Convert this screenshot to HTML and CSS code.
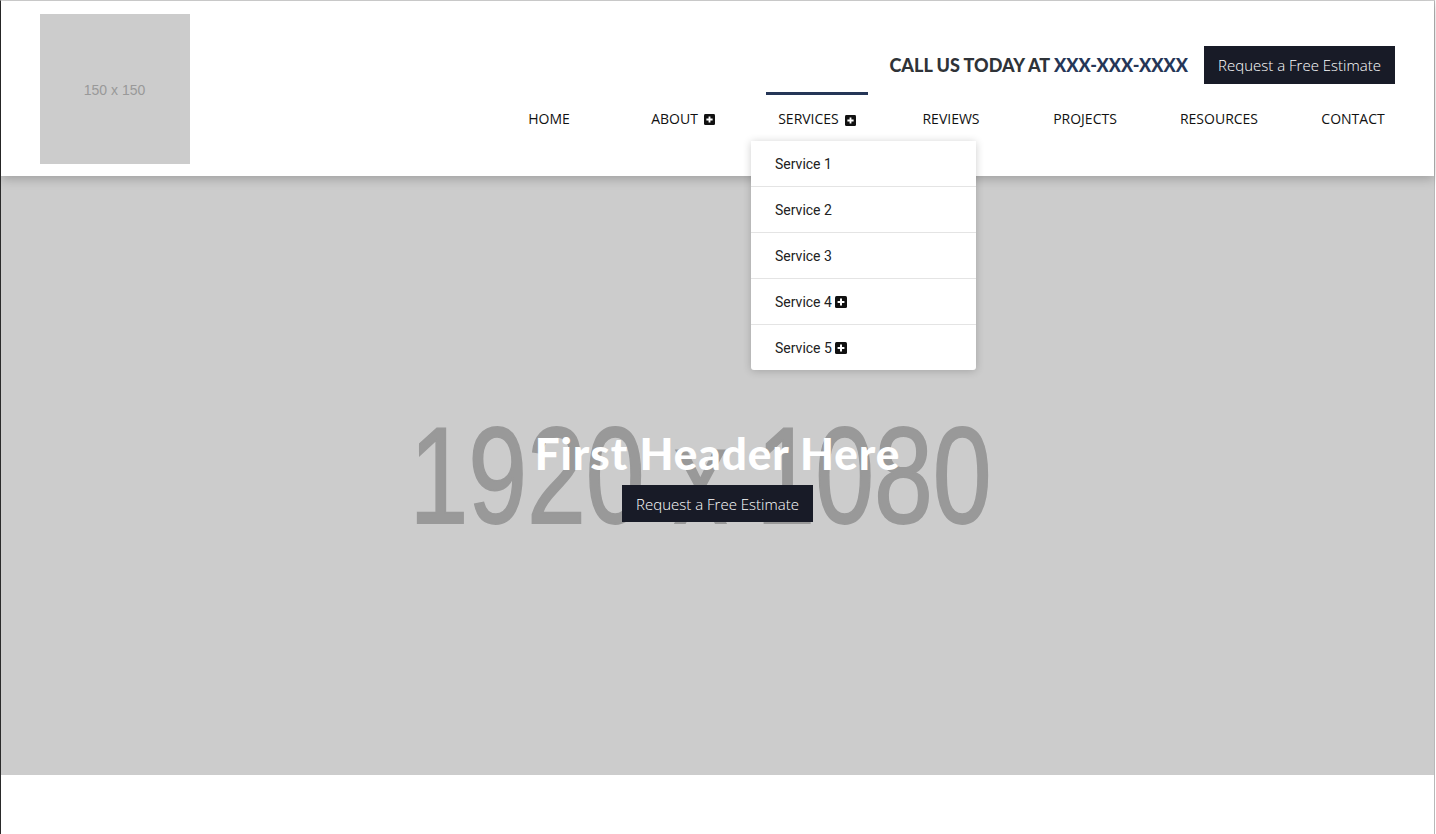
FILE: index.html
```html
<!DOCTYPE html>
<html lang="en">
<head>
<meta charset="utf-8">
<title>Home</title>
<link rel="stylesheet" href="styles.css">
</head>
<body>
<div class="page">
  <header class="site-header">
    <div class="logo"><span>150 x 150</span></div>
    <div class="header-right">
      <div class="top-row">
        <p class="call">CALL US TODAY AT <span class="phone">XXX-XXX-XXXX</span></p>
        <a class="btn" href="#">Request a Free Estimate</a>
      </div>
      <nav class="main-nav">
        <ul class="menu">
          <li class="menu-item"><a href="#">HOME</a></li>
          <li class="menu-item"><a href="#">ABOUT <svg class="plus" viewBox="0 0 12 12"><rect width="12" height="12" rx="1.5" fill="#111"/><path d="M6 2.6v6.8M2.6 6h6.8" stroke="#fff" stroke-width="2"/></svg></a></li>
          <li class="menu-item active"><a href="#">SERVICES <svg class="plus low" viewBox="0 0 12 12"><rect width="12" height="12" rx="1.5" fill="#111"/><path d="M6 2.6v6.8M2.6 6h6.8" stroke="#fff" stroke-width="2"/></svg></a>
            <ul class="dropdown">
              <li><a href="#">Service 1</a></li>
              <li><a href="#">Service 2</a></li>
              <li><a href="#">Service 3</a></li>
              <li><a href="#">Service 4 <svg class="plus sm" viewBox="0 0 12 12"><rect width="12" height="12" rx="1.5" fill="#111"/><path d="M6 2.6v6.8M2.6 6h6.8" stroke="#fff" stroke-width="2"/></svg></a></li>
              <li><a href="#">Service 5 <svg class="plus sm" viewBox="0 0 12 12"><rect width="12" height="12" rx="1.5" fill="#111"/><path d="M6 2.6v6.8M2.6 6h6.8" stroke="#fff" stroke-width="2"/></svg></a></li>
            </ul>
          </li>
          <li class="menu-item"><a href="#">REVIEWS</a></li>
          <li class="menu-item"><a href="#">PROJECTS</a></li>
          <li class="menu-item"><a href="#">RESOURCES</a></li>
          <li class="menu-item"><a href="#">CONTACT</a></li>
        </ul>
      </nav>
    </div>
  </header>
  <section class="hero">
    <div class="hero-ph">1920 x 1080</div>
    <div class="hero-content">
      <h1 class="hero-title">First Header Here</h1>
      <a class="btn" href="#">Request a Free Estimate</a>
    </div>
  </section>
  <div class="below"></div>
</div>
</body>
</html>
```

FILE: styles.css
```css
* { box-sizing: border-box; }
html, body { margin: 0; padding: 0; background: #fff; }
body { font-family: "Open Sans", "Liberation Sans", sans-serif; }
a { text-decoration: none; color: inherit; }

.page {
  width: 1435px;
  border-left: 1px solid #2a2a2a;
  border-right: 1px solid #b8b8b8;
  border-top: 1px solid #d4d4d4;
  min-height: 834px;
}

.site-header {
  position: relative;
  z-index: 5;
  height: 175px;
  background: #fff;
  display: flex;
  align-items: flex-start;
  padding: 13px 39px 0 39px;
  box-shadow: 0 3px 10px rgba(0,0,0,0.22);
}

.logo {
  width: 150px;
  height: 150px;
  background: #ccc;
  display: flex;
  align-items: center;
  justify-content: center;
  flex-shrink: 0;
  padding-top: 2px;
  padding-right: 1px;
}
.logo span {
  font-family: "Liberation Sans", Arial, sans-serif;
  font-size: 14px;
  color: #999;
}

.header-right {
  flex: 1;
  display: flex;
  flex-direction: column;
  align-items: flex-end;
  padding-top: 32px;
}

.top-row {
  display: flex;
  align-items: center;
  gap: 16px;
}
.call {
  margin: 0;
  font-family: Lato, "Liberation Sans", sans-serif;
  font-weight: 900;
  font-size: 18px;
  color: #2f3338;
}
.phone { color: #253657; }

.btn {
  display: inline-flex;
  align-items: center;
  justify-content: center;
  width: 191px;
  height: 38px;
  background: #181b27;
  color: #fff;
  font-family: "Open Sans", sans-serif;
  font-weight: 300;
  font-size: 15px;
}

.main-nav { margin-top: 8px; margin-right: -25px; }
.menu {
  list-style: none;
  margin: 0;
  padding: 0;
  display: flex;
}
.menu-item {
  position: relative;
  width: 134px;
  display: flex;
  justify-content: center;
}
.menu-item > a {
  display: inline-flex;
  align-items: center;
  gap: 6px;
  padding: 14px 12px 12px;
  border-top: 3px solid transparent;
  font-size: 14px;
  line-height: 20px;
  color: #111;
}
.menu-item.active > a { border-top-color: #253657; }

.plus { width: 11px; height: 11px; display: block; }
.plus.low { margin-top: 3px; }
.plus.sm { width: 12px; height: 12px; }

.dropdown {
  position: absolute;
  top: 100%;
  left: 1px;
  margin: 0;
  padding: 0;
  list-style: none;
  width: 225px;
  background: #fff;
  border-radius: 0 0 3px 3px;
  box-shadow: 0 1px 8px rgba(0,0,0,0.2);
  z-index: 10;
}
.dropdown li { border-top: 1px solid #e4e4e4; }
.dropdown li:first-child { border-top: none; }
.dropdown a {
  display: flex;
  align-items: center;
  gap: 3px;
  height: 45px;
  padding: 0 24px;
  font-family: Roboto, "Open Sans", sans-serif;
  font-size: 14px;
  color: #222;
}

.hero {
  position: relative;
  height: 599px;
  background: #ccc;
  display: flex;
  align-items: center;
  justify-content: center;
  overflow: hidden;
}
.hero-ph {
  position: absolute;
  left: 0;
  top: 0;
  width: 1399px;
  height: 599px;
  display: flex;
  align-items: center;
  justify-content: center;
  font-family: "Liberation Sans", Arial, sans-serif;
  font-size: 137px;
  color: #999;
  -webkit-text-stroke: 1.8px #999;
  transform: scaleX(0.772);
  white-space: nowrap;
}
.hero-content {
  position: relative;
  display: flex;
  flex-direction: column;
  align-items: center;
  margin-top: -2px;
}
.hero-title {
  margin: 0;
  font-family: Lato, "Liberation Sans", sans-serif;
  font-weight: 900;
  font-size: 44px;
  line-height: 52px;
  letter-spacing: 0.9px;
  color: #fff;
}
.hero-content .btn { margin-top: 6px; height: 37px; }

.below { height: 58px; background: #fff; }
```
